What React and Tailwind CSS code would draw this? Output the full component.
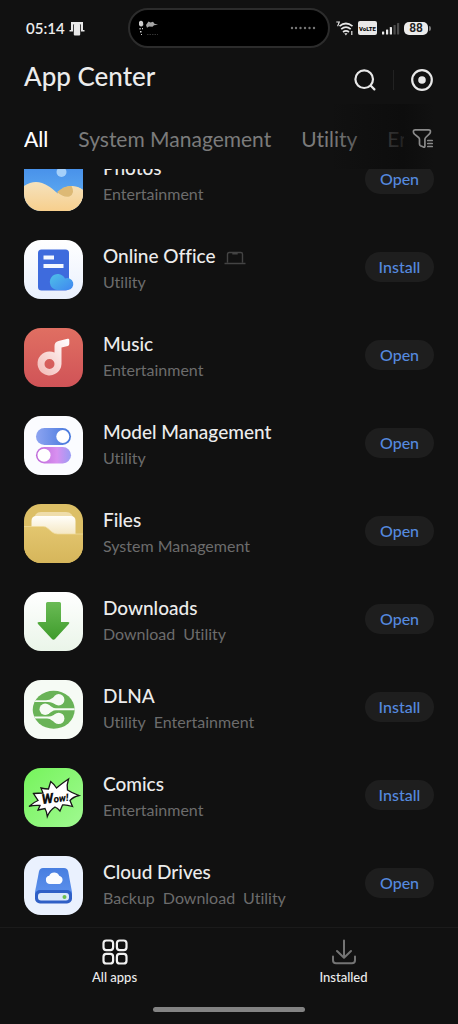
const tabs = ['All', 'System Management', 'Utility', 'Entertainment'];

const apps = [
  { name: 'Photos', tags: ['Entertainment'], action: 'Open', icon: PhotosIcon },
  { name: 'Online Office', tags: ['Utility'], action: 'Install', icon: OfficeIcon, desktop: true },
  { name: 'Music', tags: ['Entertainment'], action: 'Open', icon: MusicIcon },
  { name: 'Model Management', tags: ['Utility'], action: 'Open', icon: ModelIcon },
  { name: 'Files', tags: ['System Management'], action: 'Open', icon: FilesIcon },
  { name: 'Downloads', tags: ['Download', 'Utility'], action: 'Open', icon: DownloadsIcon },
  { name: 'DLNA', tags: ['Utility', 'Entertainment'], action: 'Install', icon: DlnaIcon },
  { name: 'Comics', tags: ['Entertainment'], action: 'Install', icon: ComicsIcon },
  { name: 'Cloud Drives', tags: ['Backup', 'Download', 'Utility'], action: 'Open', icon: DrivesIcon },
];

const App = () => {
  return (
    <div className="flex h-screen flex-col overflow-hidden bg-[#111111] font-['Lato','Noto_Sans',sans-serif] text-[#ececec] [font-variant-ligatures:none]">
      <StatusBar />

      {/* Header */}
      <header className="flex h-12 shrink-0 items-center justify-between pr-6 pl-6">
        <h1 className="pb-2 text-[26px] leading-8 font-medium">App Center</h1>
        <div className="flex items-center">
          <button type="button" aria-label="Search">
            <svg width="24" height="24" viewBox="0 0 24 24" fill="none" stroke="#e8e8e8" strokeWidth="2.2" strokeLinecap="round">
              <circle cx="11.2" cy="11.2" r="8.8" />
              <path d="M17.8 17.8l3.6 3.6" />
            </svg>
          </button>
          <span className="mx-4 h-5 w-px bg-[#222222]"></span>
          <button type="button" aria-label="Tasks">
            <svg width="24" height="24" viewBox="0 0 24 24" fill="none">
              <circle cx="12" cy="12" r="9.8" stroke="#e8e8e8" strokeWidth="2.2" />
              <circle cx="12" cy="12" r="3.8" fill="#e8e8e8" />
            </svg>
          </button>
        </div>
      </header>

      {/* Category tabs */}
      <div className="relative flex h-[65px] shrink-0 items-center px-6 pt-1">
        <nav className="flex min-w-0 flex-1 gap-[30px] overflow-hidden text-[21px] leading-7 whitespace-nowrap text-[#7b7b7b]">
          {tabs.map((tab, i) => (
            <button key={tab} type="button" className={i === 0 ? 'font-medium text-white' : ''}>
              {tab}
            </button>
          ))}
        </nav>
        <div className="pointer-events-none absolute inset-y-0 right-6 w-26 bg-gradient-to-r from-transparent via-[#0c0c0ccc] via-70% to-transparent"></div>
        <button type="button" aria-label="Filter" className="relative ml-2">
          <svg width="22" height="22" viewBox="0 0 22 22" fill="none" stroke="#8a8a8a" strokeWidth="1.7" strokeLinecap="round" strokeLinejoin="round">
            <path d="M3.3 1.8h13.2q2.3 0 1.9 2.2-.2 1.3-1.2 2.2l-3.5 3.3q-.8.8-.8 2v6.4q0 1.6-1.4 1.2l-3-1.4q-1-.5-1-1.7v-4.500q0-1.2-.9-2L2.500 6.200q-1-1-1.100-2.200-.2-2.200 1.900-2.200z" />
            <path d="M15.800 12.500h4.400M15.800 15.500h4.400M15.800 18.500h4.400" />
          </svg>
        </button>
      </div>

      {/* App list, scrolled part of a row down */}
      <main className="min-h-0 flex-1 overflow-hidden">
        <ul className="-mt-8">
          {apps.map((app) => (
            <AppRow key={app.name} {...app} />
          ))}
        </ul>
      </main>

      <BottomNav />
    </div>
  );
};

const AppRow = ({ name, tags, action, icon: Icon, desktop }) => {
  return (
    <li className="flex h-[88px] items-center px-6">
      <Icon />
      <div className="ml-5 min-w-0 flex-1">
        <h2 className="flex items-center gap-2 text-[19px] leading-6 font-medium">
          {name}
          {desktop && (
            <svg width="22" height="14" viewBox="0 0 22 14" fill="none" stroke="#444444" strokeWidth="1.4" className="mt-1">
              <path d="M3.500 11.500V3.200q0-1.700 1.700-1.700h11.600q1.700 0 1.700 1.700v8.300M.5 12.500h21M9 1.800v.9h4v-.9" />
            </svg>
          )}
        </h2>
        <p className="mt-0.5 flex gap-2 text-base leading-6 text-[#6c6c6c]">
          {tags.map((tag) => (
            <span key={tag}>{tag}</span>
          ))}
        </p>
      </div>
      <button type="button" className="mb-1 h-[30px] w-[69px] rounded-full bg-[#1e1e1e] text-base leading-5 font-medium text-[#5589df]">
        {action}
      </button>
    </li>
  );
};

const StatusBar = () => {
  return (
    <div className="grid h-14 shrink-0 grid-cols-[1fr_202px_1fr] items-center">
      <div className="flex items-center gap-1 pl-[26px]">
        <span className="text-[15px] leading-5 font-semibold">05:14</span>
        <svg width="16" height="15" viewBox="0 0 16 15" fill="#e8e8e8">
          <path d="M2 1h12v8h1.500v1.500H12V3.500H4v7H.5V9H2z" />
          <rect x="4.800" y="3" width="6.400" height="11.500" rx="1" />
        </svg>
      </div>
      <div className="flex h-10 items-center justify-between rounded-full border-2 border-[#2c2c2c] bg-black pr-3 pl-2">
        <svg width="22" height="18" viewBox="0 0 22 18" fill="#cfcfcf">
          <path d="M1 3q2-2.500 4 0l.3 3-1.300 1.500L2 7.200 1 6z" />
          <path d="M1.500 9h1.200v1.500H1.500zM4 9h1v1.200H4zM2 12h1.500v1.500H2zM3 15h1v1H3z" />
          <path d="M8 6l2.500-3.500 2 1L15 2.800l1.500 2 3.500 1-4 .4-1.500 1.500-3.500-.2-2 1.200z" opacity=".8" />
          <path d="M9 15.500h11" stroke="#333333" strokeDasharray="1.500 1" />
        </svg>
        <svg width="26" height="4" viewBox="0 0 26 4" fill="#777777">
          {[2, 6, 10.500, 15, 19.500, 24].map((x) => (
            <circle key={x} cx={x} cy="2" r="1.200" />
          ))}
        </svg>
      </div>
      <div className="flex items-center gap-1 pl-1.5">
        <svg width="18" height="15" viewBox="0 0 18 15" fill="none" stroke="#e8e8e8" strokeWidth="1.700">
          <path d="M.3 1h3L1.600 5.200" strokeWidth="1.100" />
          <path d="M3.500 5.200q6.300-5.400 13 0M5.200 8.200q4.800-4 9.500 0M7 11q3-2.300 6 0" />
          <path d="M8.300 12.200h3.200l-1.600 2.300z" fill="#e8e8e8" stroke="none" />
          <path d="M15.800 10v4" strokeWidth="1.200" />
        </svg>
        <span className="flex h-[14px] w-[19px] items-center justify-center rounded-[2px] bg-[#e8e8e8] font-['Roboto',sans-serif] text-[6px] font-extrabold text-black">
          VoLTE
        </span>
        <svg width="19" height="13" viewBox="0 0 19 13" fill="#e8e8e8">
          <rect x="1" y="9.500" width="2.200" height="3" rx=".6" />
          <rect x="5" y="7.500" width="2.200" height="5" rx=".6" />
          <rect x="8.800" y="5" width="2.200" height="7.500" rx=".6" />
          <rect x="12.500" y="3" width="2.200" height="9.500" rx=".6" fill="#4a4a4a" />
          <rect x="16" y="1" width="2.200" height="11.500" rx=".6" fill="#4a4a4a" />
        </svg>
        <span className="flex items-center gap-px">
          <span className="flex h-[13px] w-6 items-center justify-center rounded-[5px] bg-[#ececec] font-['Roboto',sans-serif] text-xs leading-none font-semibold text-[#222222]">
            88
          </span>
          <span className="h-[5px] w-[2px] rounded-r-full bg-[#777777]"></span>
        </span>
      </div>
    </div>
  );
};

const BottomNav = () => {
  return (
    <footer className="flex h-[97px] shrink-0 flex-col items-center border-t border-[#1b1b1b]">
      <nav className="grid w-full grid-cols-2 pt-[11px]">
        <button type="button" className="flex flex-col items-center gap-0.5 text-[13px] leading-5 font-medium">
          <svg width="26" height="26" viewBox="0 0 26 26" fill="none" stroke="#f2f2f2" strokeWidth="2.200">
            <rect x="1.500" y="1.500" width="9.600" height="9.600" rx="2.800" />
            <rect x="14.900" y="1.500" width="9.600" height="9.600" rx="2.800" />
            <rect x="1.500" y="14.900" width="9.600" height="9.600" rx="2.800" />
            <rect x="14.900" y="14.900" width="9.600" height="9.600" rx="2.800" />
          </svg>
          All apps
        </button>
        <button type="button" className="flex flex-col items-center gap-0.5 text-[13px] leading-5 font-medium">
          <svg width="26" height="26" viewBox="0 0 26 26" fill="none" stroke="#747474" strokeWidth="2" strokeLinecap="round" strokeLinejoin="round">
            <path d="M13 1.500v17M6 12l7 6.800 7-6.800" />
            <path d="M2 17.500v3.800q0 3 3 3h16q3 0 3-3v-3.800" />
          </svg>
          Installed
        </button>
      </nav>
      <div className="mt-auto mb-3 h-[5px] w-1/3 rounded-full bg-[#838383]"></div>
    </footer>
  );
};

const tile = 'h-[59px] w-[59px] shrink-0 rounded-[17px]';

function PhotosIcon() {
  return (
    <svg viewBox="0 0 59 59" className={tile}>
      <defs>
        <linearGradient id="sky" x2="0" y2="1">
          <stop stopColor="#3d84e6" />
          <stop offset=".7" stopColor="#5aa6f0" />
        </linearGradient>
        <linearGradient id="sand" x2="0" y2="1">
          <stop stopColor="#f5e2bd" />
          <stop offset="1" stopColor="#f7cf8d" />
        </linearGradient>
      </defs>
      <path d="M0 0h59v59H0z" fill="url(#sky)" />
      <circle cx="37.500" cy="20" r="5" fill="#a5d0fa" />
      <path d="M34 40q8-7 15-6 6 .5 10 4v21H30z" fill="#f5dcae" />
      <path d="M0 34q9-6 18-3 7 2.500 14 9 6 6 13 5 5-1 3-9 6-2 11 2v21H0z" fill="url(#sand)" />
      <path d="M33 40q8-7 14.500-6 4 7-2 10.500-6 1.500-12.500-4.500z" fill="#ddb975" />
    </svg>
  );
}

function OfficeIcon() {
  return (
    <svg viewBox="0 0 59 59" className={tile}>
      <defs>
        <linearGradient id="office-bg" x2="0" y2="1">
          <stop stopColor="#ffffff" />
          <stop offset="1" stopColor="#e9f0fd" />
        </linearGradient>
        <linearGradient id="office-cloud" x2="1" y2="1">
          <stop stopColor="#4fc0e8" />
          <stop offset="1" stopColor="#3f86f0" />
        </linearGradient>
      </defs>
      <path d="M0 0h59v59H0z" fill="url(#office-bg)" />
      <rect x="14" y="9.500" width="31" height="41" rx="3.500" fill="#3e6bdd" />
      <path d="M19.500 15.500h10.500v4H19.500zM19.500 24h20v4h-20z" fill="#f4f8ff" />
      <path d="M33 50a8 8 0 1 1 8-11.500 6 6 0 1 1 3 11.500z" fill="url(#office-cloud)" />
    </svg>
  );
}

function MusicIcon() {
  return (
    <svg viewBox="0 0 59 59" className={tile}>
      <defs>
        <linearGradient id="music-bg" x2="0" y2="1">
          <stop stopColor="#e06f62" />
          <stop offset="1" stopColor="#d05357" />
        </linearGradient>
        <linearGradient id="music-note" x1="1" x2="0" y2="1">
          <stop stopColor="#ffffff" />
          <stop offset="1" stopColor="#f3b9b5" />
        </linearGradient>
      </defs>
      <path d="M0 0h59v59H0z" fill="url(#music-bg)" />
      <path fillRule="evenodd" fill="url(#music-note)" d="M30.500 24.500V18q0-4 4-5l9-2.200q1.800-.4 1.800 1.200v4q0 1.500-1.500 1.900l-6.300 1.600V36a12 12 0 1 1-7-11.500zM25.500 31a5 5 0 1 0 0 10 5 5 0 0 0 0-10z" />
    </svg>
  );
}

function ModelIcon() {
  return (
    <svg viewBox="0 0 59 59" className={tile}>
      <defs>
        <linearGradient id="toggle-on">
          <stop stopColor="#8da4f1" />
          <stop offset="1" stopColor="#4577dc" />
        </linearGradient>
        <linearGradient id="toggle-off">
          <stop stopColor="#bd67d8" />
          <stop offset=".6" stopColor="#d890f0" />
          <stop offset="1" stopColor="#9a9cf4" />
        </linearGradient>
      </defs>
      <path d="M0 0h59v59H0z" fill="#fbfcff" />
      <rect x="12" y="12" width="35" height="17" rx="8.500" fill="url(#toggle-on)" />
      <circle cx="38.800" cy="20.500" r="6.500" fill="#ffffff" />
      <rect x="12" y="31" width="35" height="16.500" rx="8.250" fill="url(#toggle-off)" />
      <circle cx="20" cy="39.200" r="6.500" fill="#ffffff" />
    </svg>
  );
}

function FilesIcon() {
  return (
    <svg viewBox="0 0 59 59" className={tile}>
      <defs>
        <linearGradient id="folder" x2="0" y2="1">
          <stop stopColor="#e3c66f" />
          <stop offset="1" stopColor="#d6b65b" />
        </linearGradient>
        <linearGradient id="paper" x2="0" y2="1">
          <stop stopColor="#fffefa" />
          <stop offset="1" stopColor="#f3e4bb" />
        </linearGradient>
      </defs>
      <path d="M0 0h59v59H0z" fill="#dcbf66" />
      <path d="M10 17q0-9 7-9h25q7 0 8 9v8H10z" fill="#efddaa" />
      <path d="M7.500 17q0-5 5-5h34q5 0 5 5v16h-44z" fill="url(#paper)" />
      <path d="M0 22.500h19q3 0 5 2l4 3.500q2.500 2 5.500 2H59v29H0z" fill="url(#folder)" />
      <path d="M0 22.500h19q3 0 5 2l4 3.500q2.500 2 5.500 2H59" fill="none" stroke="#f0dc9d" strokeWidth=".7" />
    </svg>
  );
}

function DownloadsIcon() {
  return (
    <svg viewBox="0 0 59 59" className={tile}>
      <defs>
        <linearGradient id="down-bg" x2="0" y2="1">
          <stop stopColor="#ffffff" />
          <stop offset="1" stopColor="#eaf5e9" />
        </linearGradient>
        <linearGradient id="down-arrow" x2="0" y2="1">
          <stop stopColor="#6abb55" />
          <stop offset="1" stopColor="#3f9c2c" />
        </linearGradient>
      </defs>
      <path d="M0 0h59v59H0z" fill="url(#down-bg)" />
      <path d="M23.500 10h12q1.500 0 1.500 1.500V30h7q2.300 0 .8 1.900L31.300 46.800q-1.800 2-3.600 0L14 31.900q-1.300-1.900 1-1.900h7V11.500q0-1.500 1.500-1.500z" fill="url(#down-arrow)" />
    </svg>
  );
}

function DlnaIcon() {
  return (
    <svg viewBox="0 0 59 59" className={tile}>
      <defs>
        <clipPath id="dlna-globe">
          <ellipse cx="29.700" cy="29.700" rx="21" ry="19" />
        </clipPath>
      </defs>
      <path d="M0 0h59v59H0z" fill="#f6fbf5" />
      <g clipPath="url(#dlna-globe)">
        <path d="M0 0h59v59H0z" fill="#69b357" />
        <g fill="#f6fbf5">
          <circle cx="34.700" cy="19.800" r="5.700" />
          <circle cx="21.200" cy="29.200" r="5.700" />
          <circle cx="34.700" cy="38.400" r="5.700" />
          <path d="M5 20.200h17q4 0 6-2l4-2.200v8.500l-4-1.800q-1.500-.7-4-.7H5z" />
          <path d="M24 24.500l4 2.500q1.500 1.300 4 1.300h22v2H32q-2.500 0-4 1.200l-4 2.500z" />
          <path d="M5 36.500h17q3 0 5-.3l5-2.200v9l-4-2.500q-2-2-5-2H5z" />
        </g>
      </g>
    </svg>
  );
}

function ComicsIcon() {
  return (
    <svg viewBox="0 0 59 59" className={tile}>
      <defs>
        <linearGradient id="comic-bg" x2="1" y2="1">
          <stop stopColor="#76f45c" />
          <stop offset="1" stopColor="#a0f991" />
        </linearGradient>
      </defs>
      <path d="M0 0h59v59H0z" fill="url(#comic-bg)" />
      <path
        d="M5 38.500Q10 34 14 32.500L9.500 25.500Q14 25 19 25L17 20Q21 21 24.500 21L26.700 13.500Q30 16 32.500 20Q37 16 44.500 11Q42.500 17 43.500 22Q48 25 55 27.500Q49 29 46 32.500L48.500 38.500Q42 36.500 38.500 37L36 43Q33.500 40 31 39Q26 42 23.300 48.500Q22.500 43 21 40.500L14 42L16 37.500Q10 37 5 38.500z"
        fill="#ffffff"
        stroke="#161616"
        strokeWidth="1.300"
      />
      <text x="31" y="34.500" textAnchor="middle" transform="rotate(-8 31 30)" fill="#111111" className="font-['Roboto','Liberation_Sans',sans-serif] text-[10px] font-black italic">
        <tspan className="text-[14px]">W</tspan>ow!
      </text>
    </svg>
  );
}

function DrivesIcon() {
  return (
    <svg viewBox="0 0 59 59" className={tile}>
      <defs>
        <linearGradient id="drive" x2="0" y2="1">
          <stop stopColor="#477ee0" />
          <stop offset="1" stopColor="#5f93ee" />
        </linearGradient>
      </defs>
      <path d="M0 0h59v59H0z" fill="#eaf1fe" />
      <path d="M19 12h21q3.500 0 4.200 3.500L48 36v6H11v-6l4-20.500q.7-3.500 4-3.500z" fill="url(#drive)" />
      <rect x="11" y="34" width="37" height="13.500" rx="5" fill="#2f5fc6" />
      <rect x="14" y="37" width="31" height="7.500" rx="3" fill="#dbe8fb" />
      <circle cx="40.500" cy="41" r="2" fill="#6cc04f" />
      <path d="M26 28a4.200 4.200 0 0 1-.8-8.300 5.500 5.500 0 0 1 10 0A4.200 4.200 0 0 1 33.500 28z" fill="#fafcff" />
    </svg>
  );
}

export default App;
